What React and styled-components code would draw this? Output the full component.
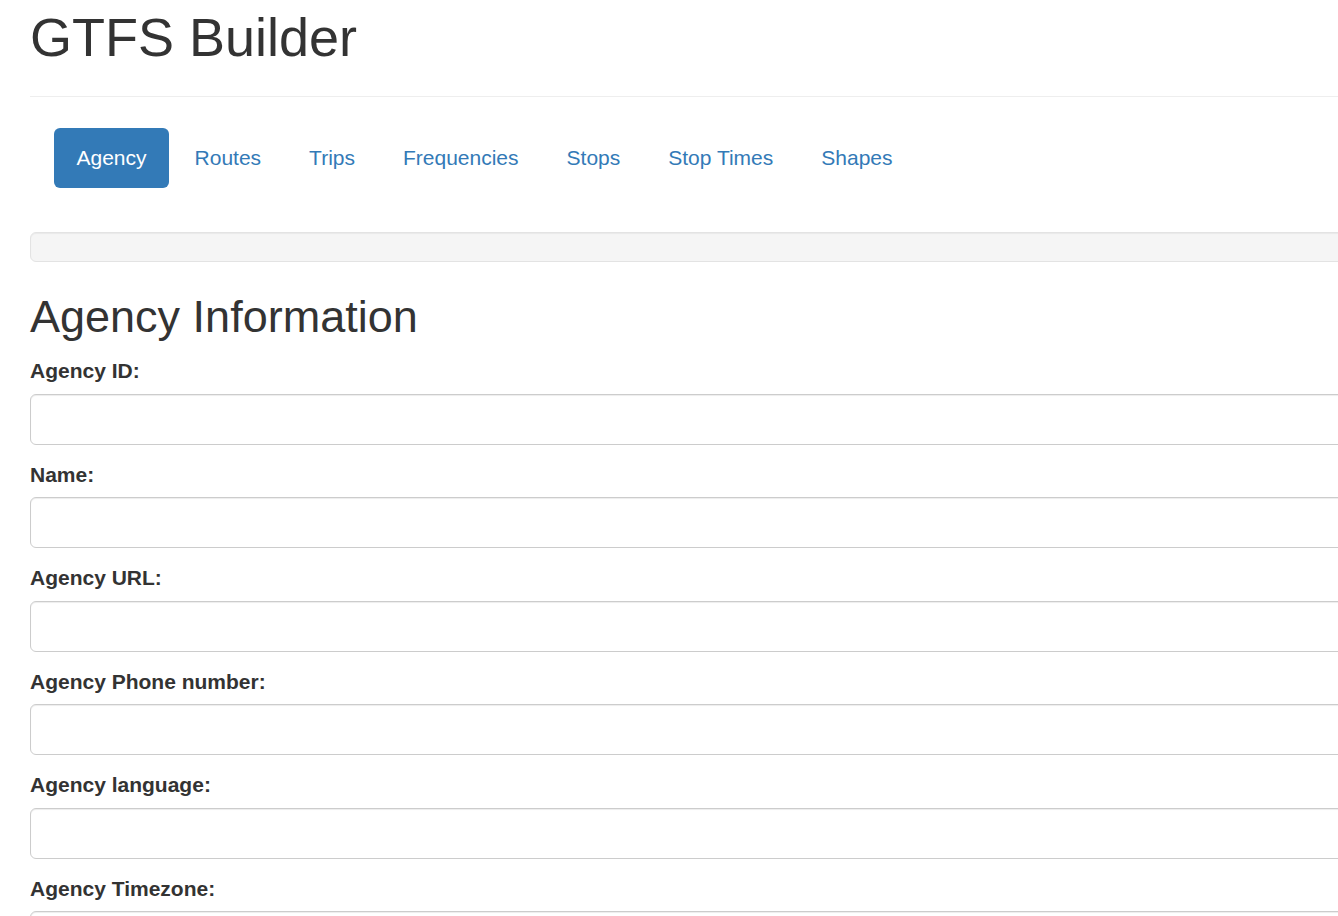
import React from "react";
import styled, { createGlobalStyle } from "styled-components";

const GlobalStyle = createGlobalStyle`
  html, body {
    margin: 0;
    padding: 0;
    background: #fff;
    overflow: hidden;
  }
  body {
    font-family: "Liberation Sans", Arial, Helvetica, sans-serif;
    color: #333;
  }
  * { box-sizing: border-box; }
`;

const Container = styled.div`
  width: 1420px;
  padding: 8px 0 0 30px;
`;

const Header = styled.header`
  padding-bottom: 28.6px;
  border-bottom: 1px solid #eee;
`;

const Title = styled.h1`
  margin: 0;
  font-size: 54px;
  font-weight: 500;
  line-height: 1.1;
`;

const Nav = styled.ul`
  display: flex;
  gap: 3px;
  list-style: none;
  margin: 31px 0 0;
  padding: 0 0 0 24px;
`;

const Pill = styled.a`
  display: block;
  padding: 15px 22.5px;
  font-size: 21px;
  line-height: 30px;
  border-radius: 6px;
  text-decoration: none;
  cursor: pointer;
  color: ${(p) => (p.$active ? "#fff" : "#337ab7")};
  background: ${(p) => (p.$active ? "#337ab7" : "transparent")};
`;

const Well = styled.div`
  margin-top: 44px;
  height: 30px;
  background: #f5f5f5;
  border: 1px solid #e3e3e3;
  border-radius: 6px;
  box-shadow: inset 0 1px 1px rgba(0, 0, 0, 0.05);
`;

const SectionTitle = styled.h2`
  margin: 30px 0 15px;
  font-size: 45px;
  font-weight: 500;
  line-height: 1.1;
`;

const FormGroup = styled.div`
  margin-bottom: 15px;
`;

const Label = styled.label`
  display: block;
  font-size: 21px;
  font-weight: bold;
  line-height: 30px;
  margin-bottom: 7.5px;
`;

const Input = styled.input`
  display: block;
  width: 100%;
  height: 51px;
  padding: 9px 18px;
  font-size: 21px;
  font-family: inherit;
  color: #555;
  background: #fff;
  border: 1px solid #ccc;
  border-radius: 6px;
  box-shadow: inset 0 1px 1px rgba(0, 0, 0, 0.075);
  outline: none;
`;

const tabs = ["Agency", "Routes", "Trips", "Frequencies", "Stops", "Stop Times", "Shapes"];
const fields = [
  "Agency ID:",
  "Name:",
  "Agency URL:",
  "Agency Phone number:",
  "Agency language:",
  "Agency Timezone:",
];

export default function App() {
  return (
    <>
      <GlobalStyle />
      <Container>
        <Header>
          <Title>GTFS Builder</Title>
        </Header>
        <Nav>
          {tabs.map((t, i) => (
            <li key={t}>
              <Pill $active={i === 0}>{t}</Pill>
            </li>
          ))}
        </Nav>
        <Well />
        <SectionTitle>Agency Information</SectionTitle>
        {fields.map((f) => (
          <FormGroup key={f}>
            <Label>{f}</Label>
            <Input type="text" />
          </FormGroup>
        ))}
      </Container>
    </>
  );
}
